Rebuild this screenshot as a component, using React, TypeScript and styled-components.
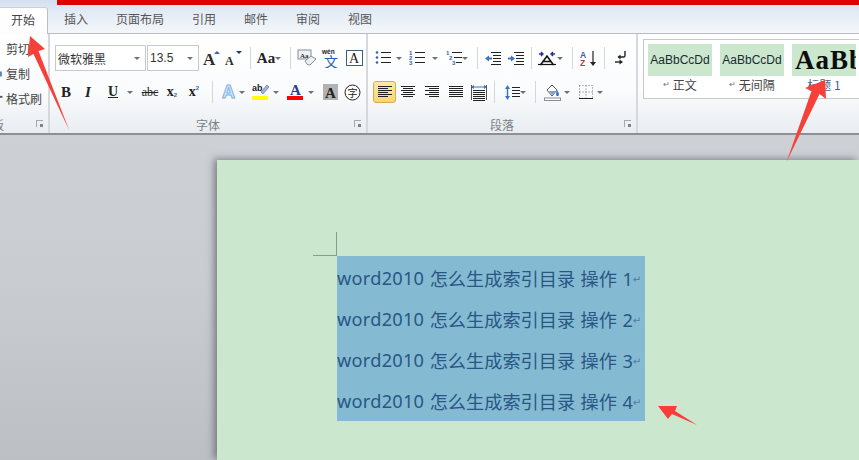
import type { ReactNode } from "react";
import styled, { createGlobalStyle } from "styled-components";

const cjk = `"Noto Sans CJK SC", "Noto Sans", sans-serif`;
const serif = `"Liberation Serif", serif`;
const sans = `"Liberation Sans", sans-serif`;

const GlobalStyle = createGlobalStyle`
  html, body {
    margin: 0;
    padding: 0;
    background: #cbced3;
  }
`;

const Page = styled.div`
  position: relative;
  display: flex;
  flex-direction: column;
  width: 859px;
  height: 460px;
  overflow: hidden;
  font-family: ${cjk};
  color: #444;
`;

const TabBar = styled.div`
  display: flex;
  flex-direction: column;
  height: 33px;
  flex: none;
  background: linear-gradient(#d3e0f0, #e4ecf6 40%, #f4f7fa);
`;

const TitleStrip = styled.div`
  height: 5px;
  margin-left: 57px;
  background: #e10000;
`;

const Tabs = styled.div`
  display: flex;
  height: 26px;
  margin-top: 2px;
  position: relative;
  z-index: 1;
`;

const Tab = styled.div<{ $active?: boolean }>`
  display: flex;
  align-items: center;
  justify-content: center;
  box-sizing: border-box;
  font-size: 12px;
  height: ${(p) => (p.$active ? "27px" : "26px")};
  padding: ${(p) => (p.$active ? "0 12px 3px 11px" : "0 14px 3px")};
  margin-right: ${(p) => (p.$active ? "2px" : "0")};
  color: ${(p) => (p.$active ? "#444" : "#555")};
  background: ${(p) => (p.$active ? "linear-gradient(#fff, #fdfdfe)" : "transparent")};
  border-right: ${(p) => (p.$active ? "1px solid #bcc0c6" : "none")};
  border-top: ${(p) => (p.$active ? "1px solid #ccd0d6" : "none")};
  border-top-right-radius: 3px;
`;

const Ribbon = styled.div`
  display: flex;
  height: 102px;
  flex: none;
  box-sizing: border-box;
  border-top: 1px solid #b9bdc3;
  border-bottom: 2px solid #8c8f94;
  background: linear-gradient(#fff, #fbfcfd 55%, #e9edf1);
`;

const Group = styled.div<{ $w: number }>`
  display: flex;
  flex-direction: column;
  flex: none;
  width: ${(p) => p.$w}px;
  box-sizing: border-box;
  border-right: 2px solid #d5d8dc;
`;

const LastGroup = styled.div`
  flex: 1;
  min-width: 0;
  padding: 5px 0 0 5px;
`;

const GroupBody = styled.div<{ $left: number }>`
  display: flex;
  flex-direction: column;
  gap: 8px;
  flex: 1;
  padding: 11px 0 0 ${(p) => p.$left}px;
`;

const Row = styled.div`
  display: flex;
  align-items: center;
  height: 26px;
`;

const GroupFoot = styled.div`
  position: relative;
  height: 19px;
  box-sizing: border-box;
  padding-top: 1px;
  display: flex;
  align-items: center;
  justify-content: center;
  font-size: 12px;
  color: #7b7f86;
`;

const Launcher = styled.span`
  position: absolute;
  right: 5px;
  top: 6px;
  width: 6px;
  height: 6px;
  border: 1px solid #a6aab0;
  border-width: 1px 0 0 1px;

  &::after {
    content: "";
    position: absolute;
    right: 0;
    bottom: 0;
    width: 3px;
    height: 3px;
    background: #7f8389;
  }
`;

const ClipColumn = styled.div`
  display: flex;
  flex-direction: column;
  flex: 1;
  padding-top: 2px;
`;

const ClipRow = styled.div`
  display: flex;
  align-items: center;
  height: 25px;
  font-size: 12px;
  color: #444;
`;

const ClipIcon = styled.span`
  display: flex;
  justify-content: flex-end;
  width: 5px;
  margin-right: 1px;
  overflow: hidden;
`;

const ClipTitle = styled.span`
  position: absolute;
  left: 0;
  width: 4px;
  overflow: hidden;
  display: flex;
  justify-content: flex-end;
  white-space: nowrap;
`;

const Combo = styled.div<{ $w: number; $font: string }>`
  display: flex;
  align-items: center;
  justify-content: space-between;
  box-sizing: border-box;
  width: ${(p) => p.$w}px;
  height: 26px;
  margin-right: 1px;
  padding: 0 5px 0 2px;
  border: 1px solid #c6c9ce;
  background: #fff;
  font-family: ${(p) => p.$font};
  font-size: 12px;
  color: #333;
`;

const Caret = styled.span<{ $ml?: number; $mr?: number }>`
  flex: none;
  width: 0;
  height: 0;
  margin-left: ${(p) => p.$ml ?? 0}px;
  margin-right: ${(p) => p.$mr ?? 0}px;
  border-left: 3px solid transparent;
  border-right: 3px solid transparent;
  border-top: 3px solid #6d7076;
`;

const Tool = styled.span<{ $w: number; $ml?: number; $mr?: number; $on?: boolean }>`
  flex: none;
  display: flex;
  align-items: center;
  justify-content: center;
  box-sizing: border-box;
  width: ${(p) => p.$w}px;
  height: ${(p) => (p.$on ? "22px" : "auto")};
  margin-left: ${(p) => p.$ml ?? 0}px;
  margin-right: ${(p) => p.$mr ?? 0}px;
  border: ${(p) => (p.$on ? "1px solid #d9a94e" : "none")};
  border-radius: 3px;
  background: ${(p) => (p.$on ? "linear-gradient(#ffe9a6, #ffd56f)" : "none")};
`;

const Sep = styled.span<{ $ml?: number; $mr?: number }>`
  flex: none;
  width: 1px;
  height: 22px;
  margin-left: ${(p) => p.$ml ?? 0}px;
  margin-right: ${(p) => p.$mr ?? 0}px;
  background: #d4d7db;
`;

const Letter = styled.span<{ $size: number; $bold?: boolean; $italic?: boolean; $under?: boolean; $strike?: boolean }>`
  font-family: ${serif};
  font-size: ${(p) => p.$size}px;
  line-height: 1;
  font-weight: ${(p) => (p.$bold ? 700 : 400)};
  font-style: ${(p) => (p.$italic ? "italic" : "normal")};
  color: #222;
  text-decoration: ${(p) => (p.$under ? "underline" : p.$strike ? "line-through" : "none")};
`;

const Script = styled.span<{ $up?: boolean }>`
  font-family: ${sans};
  font-size: 6px;
  font-weight: 700;
  color: #3a62a8;
  position: relative;
  top: ${(p) => (p.$up ? "-4px" : "3px")};
`;

const Gallery = styled.div`
  display: flex;
  gap: 8px;
  height: 60px;
  box-sizing: border-box;
  padding: 4px 0 0 4px;
  border: 1px solid #c6c9ce;
  border-right: none;
  overflow: hidden;
  background: #fff;
`;

const StyleCard = styled.div`
  display: flex;
  flex-direction: column;
  flex: none;
  width: 64px;
`;

const Swatch = styled.div<{ $big?: boolean }>`
  display: flex;
  align-items: center;
  justify-content: ${(p) => (p.$big ? "flex-start" : "center")};
  height: 32px;
  padding-left: ${(p) => (p.$big ? "3px" : "0")};
  overflow: hidden;
  background: #cbe8ce;
  color: ${(p) => (p.$big ? "#0d0d0d" : "#1c2a33")};
  font-family: ${(p) => (p.$big ? serif : sans)};
  font-size: ${(p) => (p.$big ? "27px" : "12px")};
  font-weight: ${(p) => (p.$big ? 700 : 400)};
  letter-spacing: ${(p) => (p.$big ? "1px" : "0")};
  white-space: nowrap;
`;

const StyleName = styled.div<{ $heading?: boolean }>`
  display: flex;
  justify-content: center;
  gap: 3px;
  font-size: 12px;
  line-height: 18px;
  color: ${(p) => (p.$heading ? "#4a6288" : "#444")};
  white-space: nowrap;
`;

const ReturnMark = styled.span`
  font-family: "DejaVu Sans", sans-serif;
  font-size: 8px;
  color: #5f7590;
`;

const Workspace = styled.div`
  display: flex;
  flex: 1;
  min-height: 0;
  padding: 25px 0 0 217px;
  background: linear-gradient(#cdd0d5, #c9ccd1 45%, #bcbfc4);
`;

const Sheet = styled.div`
  flex: 1;
  padding: 96px 0 0 120px;
  background: #cbe8ce;
  box-shadow: -3px -1px 7px rgba(70, 74, 82, 0.6);
`;

const Selection = styled.div`
  position: relative;
  width: 308px;
  background: #84bbd2;

  &::before {
    content: "";
    position: absolute;
    left: -24px;
    top: -24px;
    width: 23px;
    height: 23px;
    border-right: 1px solid #8b9c8f;
    border-bottom: 1px solid #8b9c8f;
  }
`;

const DocLine = styled.div`
  display: flex;
  align-items: center;
  box-sizing: border-box;
  height: 41.25px;
  padding-top: 2px;
  font-family: "Noto Sans", ${cjk};
  font-size: 18.2px;
  word-spacing: 0.7px;
  color: #2a5685;
  white-space: pre;
`;

const Latin = styled.span`
  letter-spacing: 0.25px;
`;

const Mark = styled.span`
  font-family: "DejaVu Sans", sans-serif;
  font-size: 10px;
  margin-top: 3px;
  color: #56789a;
`;

const Annotations = styled.svg`
  position: absolute;
  inset: 0;
  pointer-events: none;
`;

const Icon = ({ w = 18, h = 18, children }: { w?: number; h?: number; children: ReactNode }) => (
  <svg width={w} height={h} viewBox={`0 0 ${w} ${h}`}>
    {children}
  </svg>
);

const TextLines = ({ rows }: { rows: [number, number][] }) => (
  <Icon w={16} h={16}>
    {rows.map(([a, b], i) => (
      <rect key={i} x={a} y={2 + i * 2} width={b - a} height={1} fill="#222" />
    ))}
  </Icon>
);

const ListLines = ({ marks }: { marks: "dot" | "num" | "multi" }) => (
  <Icon w={16} h={16}>
    {[2, 7, 12].map((y, i) => (
      <g key={y}>
        {marks === "dot" && <circle cx={2} cy={y + 0.5} r={1.3} fill="#3a62a8" />}
        {marks !== "dot" && (
          <text x={marks === "multi" ? i * 3 : 0} y={y + 3} fontSize={6} fontWeight={700} fontFamily={sans} fill="#3a62a8">
            {i + 1}
          </text>
        )}
        <rect x={marks === "multi" ? 6 + i * 2 : 6} y={y} width={marks === "multi" ? 10 - i * 2 : 10} height={1} fill="#222" />
      </g>
    ))}
  </Icon>
);

const Indent = ({ flip }: { flip?: boolean }) => (
  <Icon w={17} h={15}>
    {[1, 4, 7, 10, 13].map((y, i) => (
      <rect key={y} x={i === 0 || i === 4 ? 6 : 8} y={y} width={i === 0 || i === 4 ? 10 : 8} height={1} fill="#222" />
    ))}
    <path d={flip ? "M7 7.5 3 4.5v2H0v2h3v2z" : "M0 7.5 4 4.5v2h3v2H4v2z"} fill="#3a73c4" />
  </Icon>
);

const Pilcrow = () => (
  <Icon w={14} h={16}>
    <path d="M11 1v4.5q0 1.5-1.5 1.5H4.5" fill="none" stroke="#222" strokeWidth={1.4} />
    <path d="M6.5 4.5 3.5 7l3 2.5z" fill="#222" />
    <path d="M1 12h5.5" stroke="#222" strokeWidth={1.4} />
    <path d="M5.5 9.5 9 12l-3.5 2.5z" fill="#222" />
  </Icon>
);

const CloseChars = () => (
  <Icon w={18} h={15}>
    <path d="M2.5 14 9 5l6.5 9M5 10.5h8" fill="none" stroke="#111" strokeWidth={1.6} />
    <path d="M0 13.5h18" stroke="#111" strokeWidth={1.2} />
    <path d="M1 3h3M3 1l2 2-2 2M17 3h-3M15 1l-2 2 2 2" fill="none" stroke="#1f2f9a" strokeWidth={1.4} />
  </Icon>
);

const SortAZ = () => (
  <Icon w={17} h={17}>
    <text x={0} y={7.5} fontSize={8.5} fontWeight={700} fontFamily={sans} fill="#3a62a8">A</text>
    <text x={0} y={16} fontSize={8.5} fontWeight={700} fontFamily={sans} fill="#a0443f">Z</text>
    <path d="M13 1v13" stroke="#222" strokeWidth={1.2} />
    <path d="M10 12h6l-3 4z" fill="#222" />
  </Icon>
);

const LineSpacing = () => (
  <Icon w={15} h={17}>
    <path d="M2.5 1 0 5h5zM2.5 16 0 12h5z" fill="#3a73c4" />
    <rect x={1.8} y={5} width={1.4} height={7} fill="#3a73c4" />
    {[3, 6, 9, 12].map((y) => (
      <rect key={y} x={7} y={y} width={8} height={1} fill="#222" />
    ))}
  </Icon>
);

const Distributed = () => (
  <Icon w={16} h={17}>
    <path d="M0 3h16" stroke="#3a73c4" strokeWidth={1} />
    <path d="M3 1 0 3l3 2zM13 1l3 2-3 2z" fill="#3a73c4" />
    <path d="M.5 1v15M15.5 1v15" stroke="#555" strokeWidth={1} />
    {[6, 8, 10, 12, 14, 16].map((y) => (
      <rect key={y} x={2} y={y} width={12} height={1} fill="#222" />
    ))}
  </Icon>
);

const Bucket = () => (
  <Icon w={17} h={18}>
    <path d="M3 7 8 2l5 5-5 6z" fill="#fff" stroke="#555a62" />
    <path d="M13 7q2 2.500 2 4.500a1.400 1.400 0 0 1-3 0q0-2 1-4.500z" fill="#3a73c4" />
    <path d="M5 8h7l-4 4z" fill="#7fa0d2" />
    <rect x={0.5} y={15} width={16} height={2.5} fill="#fff" stroke="#8a8e94" />
  </Icon>
);

const Borders = () => (
  <Icon w={14} h={14}>
    <path d="M.5 .5h13v13M.5 .5v13M7 .5v13M.5 7h13" fill="none" stroke="#777" strokeWidth={1} strokeDasharray="1 2" />
    <path d="M0 13.5h14" stroke="#222" strokeWidth={1} />
  </Icon>
);

const SizeA = ({ size, arrow, down }: { size: number; arrow: string; down?: boolean }) => (
  <Icon w={20} h={20}>
    <text x={1} y={17} fontSize={size} fontWeight={700} fontFamily={serif} fill="#2b2b2b">A</text>
    <path d={down ? "M12 3h6l-3 3z" : "M12 6h6l-3-3z"} fill={arrow} />
  </Icon>
);

const ClearFormat = () => (
  <Icon w={20} h={18}>
    <rect x={1} y={1} width={13} height={9} fill="#eef2f7" stroke="#7f8da3" />
    <text x={3} y={8.5} fontSize={7} fontWeight={700} fontFamily={serif} fill="#333">Aa</text>
    <path d="M8 12 14 7l5 3-6 6q-3 1-5-4z" fill="#f0eef2" stroke="#8b8f98" />
  </Icon>
);

const Phonetic = () => (
  <Icon w={20} h={20}>
    <text x={1} y={6} fontSize={6.5} fontWeight={700} fontFamily={sans} fill="#222">wén</text>
    <text x={3} y={19} fontSize={14} fontFamily={cjk} fill="#2a5db0">文</text>
  </Icon>
);

const BoxedA = () => (
  <Icon w={17} h={16}>
    <rect x={0.5} y={0.5} width={16} height={15} fill="#fff" stroke="#3d5f78" />
    <text x={3} y={13} fontSize={14} fontFamily={serif} fill="#222">A</text>
  </Icon>
);

const GlowA = () => (
  <Icon w={18} h={20}>
    <text x={1} y={16} fontSize={18} fontWeight={700} fontFamily={sans} fill="#dcebfa" stroke="#7db2e4" strokeWidth={1}>A</text>
  </Icon>
);

const Highlight = () => (
  <Icon w={17} h={20}>
    <text x={0} y={9} fontSize={9} fontWeight={700} fontFamily={sans} fill="#222">ab</text>
    <path d="M9 10 15 3l2 2-6 7z" fill="#9fb6d8" stroke="#5f7ba8" strokeWidth={0.7} />
    <rect x={0} y={14} width={16} height={4} fill="#ffff00" />
  </Icon>
);

const ColorA = () => (
  <Icon w={17} h={20}>
    <text x={3} y={13} fontSize={15} fontWeight={700} fontFamily={serif} fill="#24408e">A</text>
    <rect x={0} y={14} width={16} height={4} fill="#ff0000" />
  </Icon>
);

const ShadedA = () => (
  <Icon w={15} h={16}>
    <rect width={15} height={16} fill="#b3b3b3" />
    <text x={2} y={13.5} fontSize={15} fontWeight={700} fontFamily={serif} fill="#222">A</text>
  </Icon>
);

const CircledChar = () => (
  <Icon w={17} h={17}>
    <circle cx={8.5} cy={8.5} r={7.5} fill="#fff" stroke="#222" />
    <text x={3.5} y={12.5} fontSize={10} fontFamily={cjk} fill="#222">字</text>
  </Icon>
);

const docLines = [1, 2, 3, 4];

function App() {
  return (
    <Page>
      <GlobalStyle />
      <TabBar>
        <TitleStrip />
        <Tabs>
          <Tab $active>开始</Tab>
          <Tab>插入</Tab>
          <Tab>页面布局</Tab>
          <Tab>引用</Tab>
          <Tab>邮件</Tab>
          <Tab>审阅</Tab>
          <Tab>视图</Tab>
        </Tabs>
      </TabBar>

      <Ribbon>
        <Group $w={50}>
          <ClipColumn>
            <ClipRow><ClipIcon /> 剪切</ClipRow>
            <ClipRow>
              <ClipIcon>
                <Icon w={8} h={10}><rect x={0} y={1} width={3} height={8} fill="#5a86c0" /></Icon>
              </ClipIcon>
              复制
            </ClipRow>
            <ClipRow>
              <ClipIcon>
                <Icon w={8} h={10}><rect x={0} y={0} width={4} height={3} fill="#4c5a78" /></Icon>
              </ClipIcon>
              格式刷
            </ClipRow>
          </ClipColumn>
          <GroupFoot>
            <ClipTitle>剪贴板</ClipTitle>
            <Launcher />
          </GroupFoot>
        </Group>

        <Group $w={318}>
          <GroupBody $left={5}>
            <Row>
              <Combo $w={91} $font={cjk}>微软雅黑<Caret /></Combo>
              <Combo $w={52} $font={sans}>13.5<Caret /></Combo>
              <Tool $w={22} $ml={1}><SizeA size={17} arrow="#3a62a8" /></Tool>
              <Tool $w={22}><SizeA size={12} arrow="#1f2f9a" down /></Tool>
              <Sep $ml={5} $mr={5} />
              <Tool $w={20}><Letter $size={15} $bold>Aa</Letter></Tool>
              <Caret $ml={-1} />
              <Sep $ml={9} $mr={5} />
              <Tool $w={22}><ClearFormat /></Tool>
              <Tool $w={24} $ml={1}><Phonetic /></Tool>
              <Tool $w={22}><BoxedA /></Tool>
            </Row>
            <Row>
              <Tool $w={22}><Letter $size={15} $bold>B</Letter></Tool>
              <Tool $w={22}><Letter $size={15} $bold $italic>I</Letter></Tool>
              <Tool $w={22} $ml={3}><Letter $size={14} $bold $under>U</Letter></Tool>
              <Caret $ml={3} $mr={3} />
              <Tool $w={22} $ml={3}><Letter $size={12} $strike>abc</Letter></Tool>
              <Tool $w={22}><Letter $size={14} $bold>x</Letter><Script>2</Script></Tool>
              <Tool $w={22}><Letter $size={14} $bold>x</Letter><Script $up>2</Script></Tool>
              <Sep $ml={7} $mr={8} />
              <Tool $w={18}><GlowA /></Tool>
              <Caret $mr={6} />
              <Tool $w={18}><Highlight /></Tool>
              <Caret $ml={4} $mr={7} />
              <Tool $w={18}><ColorA /></Tool>
              <Caret $ml={4} $mr={7} />
              <Tool $w={18}><ShadedA /></Tool>
              <Tool $w={23} $ml={2}><CircledChar /></Tool>
            </Row>
          </GroupBody>
          <GroupFoot>
            字体
            <Launcher />
          </GroupFoot>
        </Group>

        <Group $w={270}>
          <GroupBody $left={5}>
            <Row>
              <Tool $w={20}><ListLines marks="dot" /></Tool>
              <Caret $ml={3} $mr={5} />
              <Tool $w={20}><ListLines marks="num" /></Tool>
              <Caret $ml={5} $mr={6} />
              <Tool $w={20}><ListLines marks="multi" /></Tool>
              <Caret $ml={-2} />
              <Sep $ml={9} $mr={5} />
              <Tool $w={20}><Indent /></Tool>
              <Tool $w={20} $ml={3}><Indent flip /></Tool>
              <Sep $ml={5} $mr={5} />
              <Tool $w={20}><CloseChars /></Tool>
              <Caret />
              <Sep $ml={9} $mr={5} />
              <Tool $w={20}><SortAZ /></Tool>
              <Sep $ml={6} $mr={7} />
              <Tool $w={18}><Pilcrow /></Tool>
            </Row>
            <Row>
              <Tool $w={23} $on><TextLines rows={[[1, 15], [1, 11], [1, 15], [1, 11], [1, 15], [1, 11]]} /></Tool>
              <Tool $w={24}><TextLines rows={[[1, 15], [3, 13], [1, 15], [3, 13], [1, 15], [3, 13]]} /></Tool>
              <Tool $w={24}><TextLines rows={[[1, 15], [5, 15], [1, 15], [5, 15], [1, 15], [5, 15]]} /></Tool>
              <Tool $w={24}><TextLines rows={[[1, 15], [1, 15], [1, 15], [1, 15], [1, 15], [1, 15]]} /></Tool>
              <Tool $w={22}><Distributed /></Tool>
              <Sep $ml={4} $mr={7} />
              <Tool $w={20}><LineSpacing /></Tool>
              <Caret $ml={-2} />
              <Sep $ml={9} $mr={6} />
              <Tool $w={20}><Bucket /></Tool>
              <Caret $ml={2} $mr={8} />
              <Tool $w={16}><Borders /></Tool>
              <Caret $ml={3} />
            </Row>
          </GroupBody>
          <GroupFoot>
            段落
            <Launcher />
          </GroupFoot>
        </Group>

        <LastGroup>
          <Gallery>
            <StyleCard>
              <Swatch>AaBbCcDd</Swatch>
              <StyleName><ReturnMark>↵</ReturnMark>正文</StyleName>
            </StyleCard>
            <StyleCard>
              <Swatch>AaBbCcDd</Swatch>
              <StyleName><ReturnMark>↵</ReturnMark>无间隔</StyleName>
            </StyleCard>
            <StyleCard>
              <Swatch $big>AaBbC</Swatch>
              <StyleName $heading>标题 1</StyleName>
            </StyleCard>
          </Gallery>
        </LastGroup>
      </Ribbon>

      <Workspace>
        <Sheet>
          <Selection>
            {docLines.map((n) => (
              <DocLine key={n}>
                <Latin>word2010</Latin> 怎么生成索引目录 操作 {n}
                <Mark>↵</Mark>
              </DocLine>
            ))}
          </Selection>
        </Sheet>
      </Workspace>

      <Annotations width={859} height={460} viewBox="0 0 859 460">
        <path d="M30 36 45 49 38.5 51 69.5 131 33.5 54 28 57z" fill="#f8403a" />
        <path d="M825 80 826 99 819.5 94 786.5 162 811.5 91 805 88z" fill="#f8403a" />
        <path d="M658 406 677 406 675 411 697 425 672 414 668 419z" fill="#fb3c38" />
      </Annotations>
    </Page>
  );
}

export default App;
